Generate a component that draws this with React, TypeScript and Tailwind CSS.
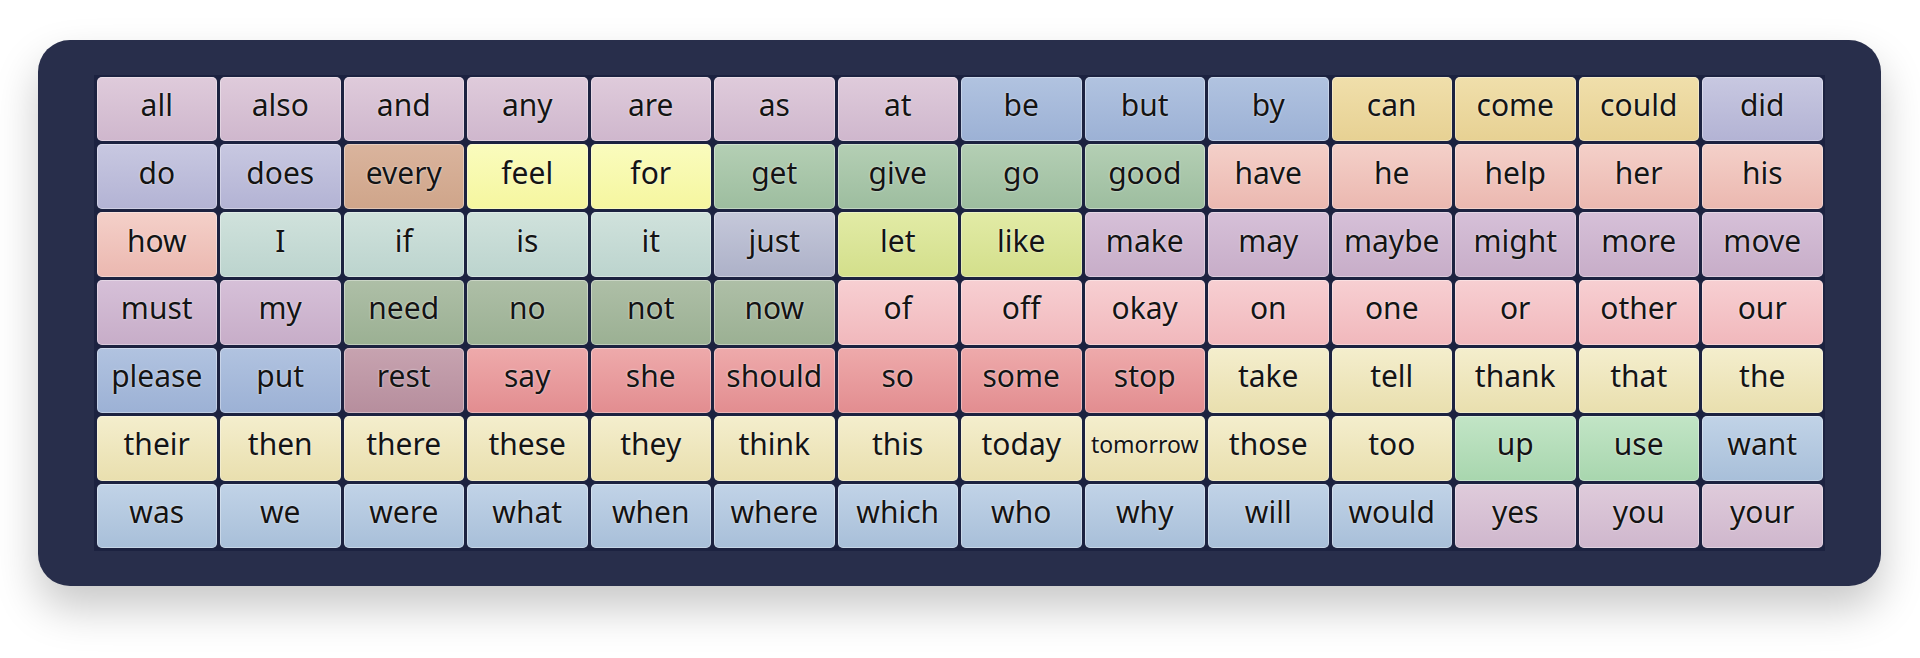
import React from "react";

const C: Record<string, string> = {
  A: "from-[#dfcbdb] to-[#cfb7cd]",
  B: "from-[#b1c3e0] to-[#9cb1d5]",
  C: "from-[#f0dfab] to-[#e7d193]",
  D: "from-[#c8c8e1] to-[#b3b3d4]",
  E: "from-[#dab49d] to-[#cfa58a]",
  F: "from-[#fafcbd] to-[#f5f69f]",
  G: "from-[#b4cfb4] to-[#9dbd9f]",
  H: "from-[#f4d0c9] to-[#ebb8b0]",
  I: "from-[#d0e2dc] to-[#bcd4ce]",
  J: "from-[#c5c8da] to-[#adb1c8]",
  K: "from-[#e2eba6] to-[#d3df8b]",
  L: "from-[#d6c0d8] to-[#c7adc8]",
  M: "from-[#aebfa7] to-[#9bb093]",
  N: "from-[#f7cfd2] to-[#f1b8bc]",
  O: "from-[#c7a3b0] to-[#b68e9d]",
  P: "from-[#eeaaab] to-[#e28d90]",
  Q: "from-[#f4eecd] to-[#e9dfae]",
  R: "from-[#c2e5c6] to-[#a8d6ae]",
  S: "from-[#c1d3e7] to-[#a8bfd9]",
};

const rows: [string, string][][] = [
  [["all","A"],["also","A"],["and","A"],["any","A"],["are","A"],["as","A"],["at","A"],["be","B"],["but","B"],["by","B"],["can","C"],["come","C"],["could","C"],["did","D"]],
  [["do","D"],["does","D"],["every","E"],["feel","F"],["for","F"],["get","G"],["give","G"],["go","G"],["good","G"],["have","H"],["he","H"],["help","H"],["her","H"],["his","H"]],
  [["how","H"],["I","I"],["if","I"],["is","I"],["it","I"],["just","J"],["let","K"],["like","K"],["make","L"],["may","L"],["maybe","L"],["might","L"],["more","L"],["move","L"]],
  [["must","L"],["my","L"],["need","M"],["no","M"],["not","M"],["now","M"],["of","N"],["off","N"],["okay","N"],["on","N"],["one","N"],["or","N"],["other","N"],["our","N"]],
  [["please","B"],["put","B"],["rest","O"],["say","P"],["she","P"],["should","P"],["so","P"],["some","P"],["stop","P"],["take","Q"],["tell","Q"],["thank","Q"],["that","Q"],["the","Q"]],
  [["their","Q"],["then","Q"],["there","Q"],["these","Q"],["they","Q"],["think","Q"],["this","Q"],["today","Q"],["tomorrow","Q"],["those","Q"],["too","Q"],["up","R"],["use","R"],["want","S"]],
  [["was","S"],["we","S"],["were","S"],["what","S"],["when","S"],["where","S"],["which","S"],["who","S"],["why","S"],["will","S"],["would","S"],["yes","A"],["you","A"],["your","A"]],
];

export default function App() {
  return (
    <div className="w-[1920px] h-[658px] bg-white pt-[40px] pl-[38px]" style={{ fontFamily: '"Noto Sans", sans-serif' }}>
      <div className="w-[1843px] h-[546px] rounded-[32px] bg-[#282e4b] px-[56px] py-[35px] shadow-[0_22px_44px_rgba(0,0,0,0.22)]">
        <div className="h-full bg-[#1c2240] px-[2.5px] pt-[1.5px] pb-[2.5px] grid grid-cols-14 grid-rows-7 gap-[3px]">
          {rows.flat().map(([w, k], i) => (
            <div
              key={i}
              className={`rounded-[5px] bg-linear-to-b ${C[k]} shadow-[inset_0_0_0_1px_rgba(255,255,255,0.35)] flex items-center justify-center text-[#141414] ${w === "tomorrow" ? "text-[23px] pb-[7px]" : "text-[30px] pb-[8px]"} leading-none [text-shadow:0_0_2px_rgba(255,255,255,0.85)]`}
            >
              {w}
            </div>
          ))}
        </div>
      </div>
    </div>
  );
}
